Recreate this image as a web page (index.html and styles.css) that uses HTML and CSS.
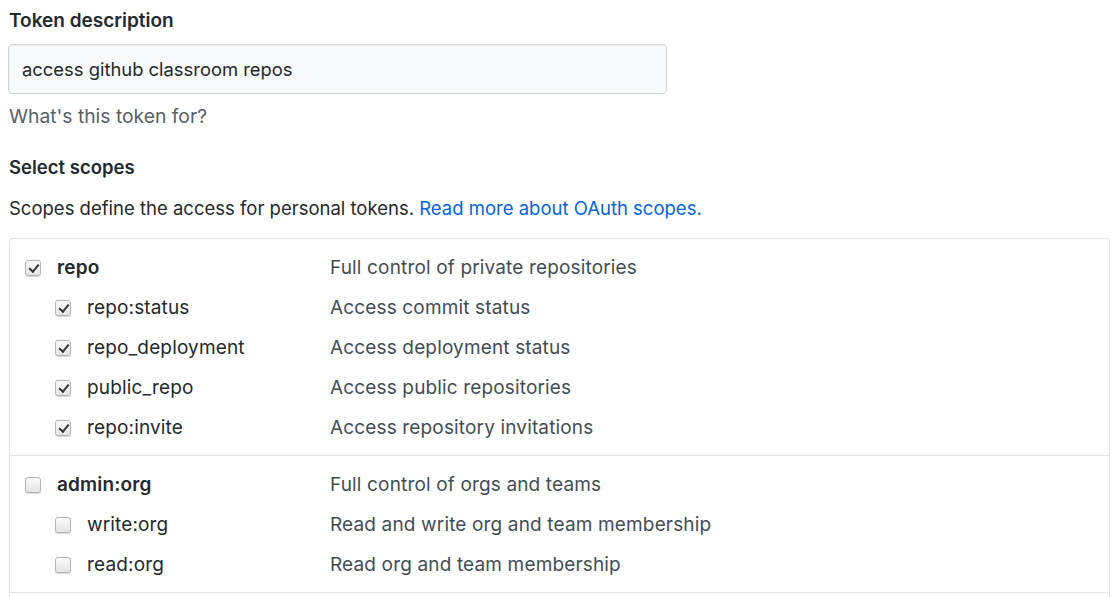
FILE: index.html
```html
<!DOCTYPE html>
<html>
<head>
<meta charset="utf-8">
<link rel="stylesheet" href="styles.css">
</head>
<body>
<div class="page">
  <div class="field-label">Token description</div>
  <div class="input">access github classroom repos</div>
  <div class="hint">What's this token for?</div>
  <div class="section-label">Select scopes</div>
  <p class="intro">Scopes define the access for personal tokens. <a class="link" href="#">Read more about OAuth scopes.</a></p>
  <div class="scopes">
    <div class="group">
      <div class="row top"><div class="name"><span class="cb on"></span><b>repo</b></div><div class="desc">Full control of private repositories</div></div>
      <div class="row sub"><div class="name"><span class="cb on"></span>repo:status</div><div class="desc">Access commit status</div></div>
      <div class="row sub"><div class="name"><span class="cb on"></span>repo_deployment</div><div class="desc">Access deployment status</div></div>
      <div class="row sub"><div class="name"><span class="cb on"></span>public_repo</div><div class="desc">Access public repositories</div></div>
      <div class="row sub"><div class="name"><span class="cb on"></span>repo:invite</div><div class="desc">Access repository invitations</div></div>
    </div>
    <div class="group">
      <div class="row top"><div class="name"><span class="cb"></span><b>admin:org</b></div><div class="desc">Full control of orgs and teams</div></div>
      <div class="row sub"><div class="name"><span class="cb"></span>write:org</div><div class="desc">Read and write org and team membership</div></div>
      <div class="row sub"><div class="name"><span class="cb"></span>read:org</div><div class="desc">Read org and team membership</div></div>
    </div>
    <div class="group rest"></div>
  </div>
</div>
</body>
</html>
```
FILE: styles.css
```css
html, body { margin: 0; padding: 0; background: #fff; }
body {
  font-family: Inter, "Liberation Sans", Arial, sans-serif;
  font-size: 18px;
  color: #24292e;
  overflow: hidden;
  height: 597px;
}
.page { padding: 9px 10px 0 9px; }
.field-label, .section-label {
  font-weight: 600;
  line-height: 24px;
  font-size: 19px;
}
.section-label { font-size: 18.5px; }
.input {
  margin: 11px 0 0 -1px;
  height: 48px;
  box-sizing: content-box;
  border: 1px solid #d1d5da;
  border-radius: 4px;
  background: #fafbfc;
  box-shadow: inset 0 1px 2px rgba(27,31,35,0.075);
  padding: 0 0 0 13px;
  width: 644px;
  line-height: 48px;
  font-size: 18.4px;
}
.hint { margin-top: 10px; line-height: 24px; color: #586069; font-size: 19.3px; }
.section-label { margin-top: 27px; }
.intro { margin: 17px 0 0; line-height: 24px; font-size: 18.5px; }
.link { color: #0366d6; text-decoration: none; }
.scopes {
  margin-top: 18px;
  border: 1px solid #e1e4e8;
  border-bottom: none;
  border-radius: 4px 4px 0 0;
}
.group { padding: 9px 0 7px; border-bottom: 1px solid #e1e4e8; }
.group.rest { height: 40px; border-bottom: none; }
.row { display: flex; height: 40px; align-items: center; color: #24292e; font-size: 19px; letter-spacing: 0.15px; line-height: 24px; }
.row b { font-weight: 600; }
.name { width: 320px; display: flex; align-items: center; }
.row.top .name { padding-left: 15px; width: 305px; }
.row.sub .name { padding-left: 45px; width: 275px; }
.desc { color: #444d56; }
.cb {
  width: 14px; height: 14px;
  border: 1px solid #b3b3b3;
  border-radius: 3px;
  background: linear-gradient(#fbfbfb, #e4e4e4);
  box-shadow: 0 1px 1px rgba(0,0,0,0.15);
  margin-right: 16px;
  position: relative;
  flex: none;
}
.cb.on::after {
  content: "";
  position: absolute;
  left: 4.5px; top: 1px;
  width: 3.5px; height: 8px;
  border: solid #333;
  border-width: 0 2.4px 2.4px 0;
  transform: rotate(40deg);
}
```
